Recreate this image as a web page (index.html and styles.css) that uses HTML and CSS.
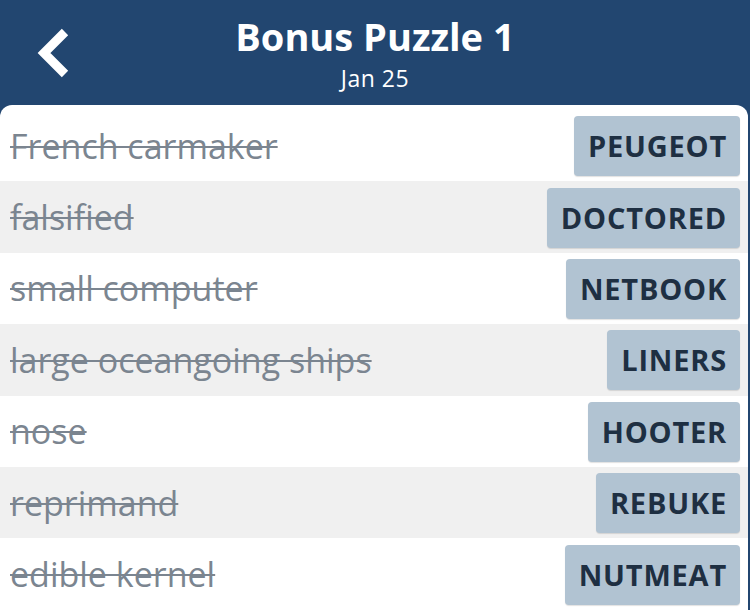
FILE: index.html
```html
<!DOCTYPE html>
<html lang="en">
<head>
<meta charset="UTF-8">
<title>Bonus Puzzle 1</title>
<link rel="stylesheet" href="styles.css">
</head>
<body>
<div class="header">
<a class="back" href="#">
<svg width="40" height="56" viewBox="0 0 40 56">
<polyline points="33,6 12,27 33,48" fill="none" stroke="#fff" stroke-width="9" stroke-linejoin="miter"/>
</svg>
</a>
<div class="title">Bonus Puzzle 1</div>
<div class="subtitle">Jan 25</div>
</div>
<div class="card">
<div class="row">
<span class="clue">French carmaker</span>
<span class="answer">PEUGEOT</span>
</div>
<div class="row">
<span class="clue">falsified</span>
<span class="answer">DOCTORED</span>
</div>
<div class="row">
<span class="clue">small computer</span>
<span class="answer">NETBOOK</span>
</div>
<div class="row">
<span class="clue">large oceangoing ships</span>
<span class="answer">LINERS</span>
</div>
<div class="row">
<span class="clue">nose</span>
<span class="answer">HOOTER</span>
</div>
<div class="row">
<span class="clue">reprimand</span>
<span class="answer">REBUKE</span>
</div>
<div class="row">
<span class="clue">edible kernel</span>
<span class="answer">NUTMEAT</span>
</div>
</div>
</body>
</html>
```

FILE: styles.css
```css
body {
    margin: 0;
    padding: 0;
    background: #224670;
    font-family: 'Open Sans', 'Noto Sans', sans-serif;
    height: 610px;
    overflow: hidden;
}
.header {
    position: relative;
    height: 105px;
    display: flex;
    flex-direction: column;
    align-items: center;
    color: white;
}
.back {
    position: absolute;
    left: 32px;
    top: 26px;
}
.back svg {
    display: block;
}
.title {
    font-size: 38px;
    font-weight: bold;
    margin-top: 11px;
    line-height: 50px;
}
.subtitle {
    font-size: 23px;
    letter-spacing: 0.5px;
    line-height: 30px;
    margin-top: 2px;
}
.card {
    background: white;
    border-radius: 12px 12px 0 0;
    margin-right: 2px;
    padding-top: 5px;
}
.row {
    height: 71.4px;
    box-sizing: border-box;
    display: flex;
    align-items: center;
    justify-content: space-between;
    padding: 0 8px 0 10px;
}
.row:nth-child(even) {
    background: #f0f0f0;
}
.clue {
    font-size: 34px;
    color: #7b8590;
    text-decoration: line-through;
    text-decoration-thickness: 2px;
}
.answer {
    background: #b1c3d2;
    color: #1e2f42;
    font-size: 29px;
    font-weight: bold;
    letter-spacing: 0.8px;
    height: 60px;
    line-height: 60px;
    padding: 0 13px 0 14px;
    border-radius: 4px;
    box-shadow: 0 1px 1px rgba(0,0,0,0.12);
    margin-top: 1px;
}
```
